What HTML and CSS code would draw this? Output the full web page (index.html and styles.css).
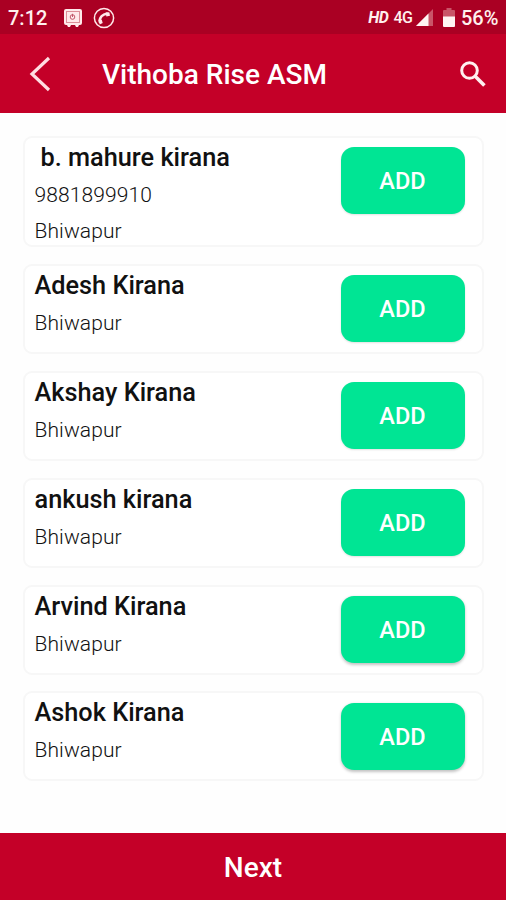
FILE: index.html
```html
<!DOCTYPE html>
<html lang="en">
<head>
<meta charset="utf-8">
<meta name="viewport" content="width=device-width, initial-scale=1">
<title>Vithoba Rise ASM</title>
<link rel="stylesheet" href="styles.css">
</head>
<body>
<div class="screen">
  <div class="status">
    <span class="clock">7:12</span>
    <svg class="safe" width="20" height="20" viewBox="0 0 20 20"><path d="M3 1h14q2 0 2 2v12q0 2-2 2h-1l-1 2h-2l-1-2H8l-1 2H5l-1-2H3q-2 0-2-2V3q0-2 2-2z" fill="#ffe9ea"/><rect x="3.5" y="3.5" width="13" height="11" fill="none" stroke="#dc8f98" stroke-width="1"/><circle cx="9.5" cy="9" r="2.3" fill="none" stroke="#c2586a" stroke-width="1"/><path d="M9.5 5.8V9" stroke="#c2586a"/></svg>
    <svg class="call" width="22" height="22" viewBox="0 0 22 22"><circle cx="11" cy="11" r="9.6" fill="none" stroke="#ffe9ea" stroke-width="1.5"/><path d="M7 15.8C5.6 10.8 10 6.2 15.6 6.8" fill="none" stroke="#ffe9ea" stroke-width="2.4"/><path d="M5.3 12.8l3.4-.4 1 3.6-3 1.6zM12.6 5.2l3.8.2.6 3.4-3.6.8z" fill="#ffe9ea"/></svg>
    <span class="hd">HD</span>
    <span class="net">4G</span>
    <svg class="signal" width="17" height="17" viewBox="0 0 17 17"><path d="M0 17L17 0v17z" fill="#c95568"/><path d="M0 17L12.5 4.5V17z" fill="#fff5f3"/></svg>
    <svg class="battery" width="12" height="19" viewBox="0 0 12 19"><path d="M3.5 0h5v2H11q1 0 1 1v6H0V3q0-1 1-1h2.5z" fill="#c95568"/><path d="M0 8.5h12V18q0 1-1 1H1q-1 0-1-1z" fill="#fff5f3"/></svg>
    <span class="percent">56%</span>
  </div>
  <header class="toolbar">
    <svg class="back" width="22" height="38" viewBox="0 0 22 38"><path d="M20 3L3 19l17 16" fill="none" stroke="#ffdde2" stroke-width="3.2"/></svg>
    <h1 class="title">Vithoba Rise ASM</h1>
    <svg class="search" width="26" height="26" viewBox="0 0 26 26"><circle cx="9.5" cy="9.5" r="7.8" fill="none" stroke="#fff0f0" stroke-width="3"/><path d="M15.2 15.2l9.2 9.2" stroke="#fff0f0" stroke-width="3.6"/></svg>
  </header>
  <main class="list">
    <article class="card tall">
      <div class="info"><h2 class="name indent">b. mahure kirana</h2><p class="detail">9881899910</p><p class="detail">Bhiwapur</p></div>
      <button class="add">ADD</button>
    </article>
    <article class="card">
      <div class="info"><h2 class="name">Adesh Kirana</h2><p class="detail">Bhiwapur</p></div>
      <button class="add">ADD</button>
    </article>
    <article class="card">
      <div class="info"><h2 class="name">Akshay Kirana</h2><p class="detail">Bhiwapur</p></div>
      <button class="add">ADD</button>
    </article>
    <article class="card">
      <div class="info"><h2 class="name">ankush kirana</h2><p class="detail">Bhiwapur</p></div>
      <button class="add">ADD</button>
    </article>
    <article class="card">
      <div class="info"><h2 class="name">Arvind Kirana</h2><p class="detail">Bhiwapur</p></div>
      <button class="add raised">ADD</button>
    </article>
    <article class="card">
      <div class="info"><h2 class="name">Ashok Kirana</h2><p class="detail">Bhiwapur</p></div>
      <button class="add raised">ADD</button>
    </article>
  </main>
  <button class="next">Next</button>
</div>
</body>
</html>
```
FILE: styles.css
```css
* { box-sizing: border-box; }
body, h1, h2, p { margin: 0; }
body { font-family: Roboto, "Liberation Sans", sans-serif; background: #fefefe; }
button { border: 0; padding: 0; font-family: inherit; color: #fff; }
svg { display: block; flex: none; }

.screen { display: flex; flex-direction: column; height: 900px; overflow: hidden; }

.status { display: flex; align-items: center; height: 34px; flex: none; padding: 1px 8px 0; background: #aa0023; color: #fff0ee; font-weight: 500; white-space: nowrap; }
.clock { width: 55px; font-size: 20px; }
.call { margin-left: 10px; }
.hd { margin-left: auto; font-size: 16px; font-style: italic; font-weight: 700; letter-spacing: -.3px; }
.net { margin-left: 5px; font-size: 16px; letter-spacing: -.8px; }
.signal { margin-left: 4px; }
.battery { margin-left: 10px; }
.percent { width: 37px; margin-left: 6px; font-size: 20px; }

.toolbar { display: flex; align-items: center; height: 79px; flex: none; padding: 0 20px 0 29px; background: #c40028; color: #fff; }
.title { margin-left: 51px; padding-top: 2px; flex: 1; font-size: 28px; font-weight: 500; line-height: 32px; }

.list { display: flex; flex-direction: column; flex: 1; gap: 16.9px; padding: 22.5px 22px 0 23px; }
.card { display: flex; justify-content: space-between; align-items: flex-start; height: 90px; flex: none; padding: 9.5px 17.5px 0 9.5px; border: 2px solid #f7f7f7; border-radius: 9px; background: #fff; }
.card.tall { height: 111.5px; }
.info { margin-top: -4.5px; color: #111; }
.name { font-size: 25.3px; font-weight: 500; line-height: 30px; }
.indent { padding-left: 6px; }
.detail { height: 36px; padding-top: 9px; font-size: 21px; font-weight: 300; line-height: 27px; letter-spacing: .1px; }
.add { width: 124px; height: 67px; padding-top: 1px; border-radius: 13px; background: #00e594; font-size: 23.5px; font-weight: 500; box-shadow: 0 1px 2px rgba(0, 0, 0, .12); }
.add.raised { box-shadow: 0 1.5px 3px rgba(0, 0, 0, .24); }

.next { height: 67px; flex: none; background: #c40028; font-size: 28px; font-weight: 500; padding-top: 2px; }
```
